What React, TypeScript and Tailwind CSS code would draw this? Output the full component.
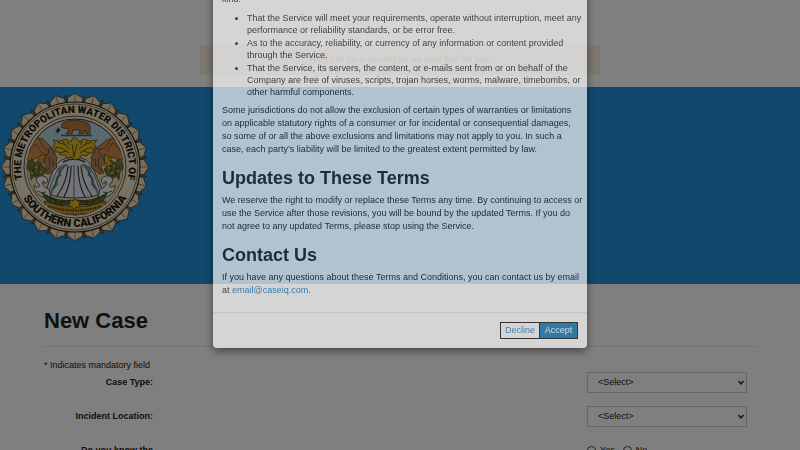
import React from "react";

const lobes = Array.from({ length: 24 }, (_, i) => i * 15);

function Seal() {
  return (
    <svg viewBox="0 0 150 150" className="block size-[150px]" role="img" aria-label="The Metropolitan Water District of Southern California">
      <defs>
        <path id="seal-top" d="M 26.1 97.8 A 54 54 0 1 1 123.9 97.8" />
        <path id="seal-bottom" d="M 15.4 87 A 61 61 0 0 0 134.6 87" />
        <clipPath id="seal-scene">
          <circle cx="75" cy="75" r="48" />
        </clipPath>
      </defs>
      {lobes.map((a) => (
        <g key={a} transform={`rotate(${a} 75 75)`} stroke="#3a2a18" strokeWidth="0.7">
          <path d="M84 14 L86 3.500 L81 8 Z" fill="#b9813c" transform="rotate(-1 75 75)" />
          <path d="M67.500 14 L67.500 6 Q71 4 75 1 Q79 4 82.500 6 L82.500 14 Z" fill="#efdfb8" />
          <path d="M75 2 V12" fill="none" strokeWidth="0.5" />
        </g>
      ))}
      <circle cx="75" cy="75" r="65" fill="#efdfb8" stroke="#33261a" strokeWidth="1.200" />
      <circle cx="75" cy="75" r="63" fill="#efe4c6" stroke="#33261a" strokeWidth="0.6" />
      <circle cx="75" cy="75" r="51" fill="#efe4c6" stroke="#33261a" strokeWidth="0.800" />
      <circle cx="75" cy="75" r="48" fill="#b5d3dc" stroke="#33261a" strokeWidth="1" />
      <g clipPath="url(#seal-scene)">
        <path d="M22 62 H128 V130 H22 Z" fill="#e9d7a8" />
        <path d="M22 64 L33 49 L38 46 L43 47 L54 58 L54 64 L42 64 L24 71 Z" fill="#c98a4b" stroke="#5b3818" strokeWidth="0.7" />
        <path d="M128 64 L117 49 L112 46 L107 48 L95 57 L95 64 L106 64 L126 69 Z" fill="#c98a4b" stroke="#5b3818" strokeWidth="0.7" />
        <path d="M28 60 L36 52 L43 62 M39 47 L44 56 L50 60 M122 61 L113 50 L107 60 M111 47 L105 56 L98 58" fill="none" stroke="#6b431e" strokeWidth="0.7" />
        {/* dam face and spillway */}
        <path d="M45 102 L53 78 Q59 65 74 65 Q89 65 94 78 L104 102 Q75 110 45 102 Z" fill="#e9e8ee" stroke="#333" strokeWidth="0.800" />
        <path d="M63 70 Q74 64 85 70" fill="none" stroke="#444" strokeWidth="1.500" />
        <g fill="none" stroke="#2d3c42" strokeWidth="1.200" strokeLinecap="round">
          <path d="M71 74 Q71 92 64 105" />
          <path d="M74 73 V106" strokeWidth="0.700" />
          <path d="M78 74 Q78 92 85 105" />
          <path d="M68 74 Q67 90 57 104" />
          <path d="M81 74 Q82 90 92 104" />
          <path d="M66 73 Q57 76 60 83 Q55 86 57 92 Q52 96 51 102" stroke="#6f9b9b" strokeWidth="2.500" />
          <path d="M83 73 Q92 76 89 83 Q94 86 92 92 Q97 96 98 102" stroke="#6f9b9b" strokeWidth="2.500" />
          <path d="M64 75 Q58 82 54 96 M85 75 Q91 82 95 96" strokeWidth="0.900" />
          <path d="M60 74 Q55 80 50 96 M89 74 Q94 80 99 96" strokeWidth="0.700" />
        </g>
        {/* groves on both banks */}
        <g fill="#6b7a3e" stroke="#26331b" strokeWidth="0.6">
          <path d="M28 70 L32 67 L35 71 L39 68 L42 73 L46 76 L43 83 L38 87 L34 84 L31 88 L30 80 L27 77 Z" />
          <path d="M122 70 L118 67 L115 71 L111 68 L108 74 L104 77 L107 83 L112 87 L116 84 L119 88 L120 80 L123 77 Z" />
          <path d="M105 62 L109 64 L110 69 L113 72 L109 75 L104 71 Z M40 64 L45 62 L46 69 L42 72 L38 69 Z" fill="#d8a828" />
        </g>
        <path d="M30 74 L36 84 M34 72 L33 84 M40 72 L38 84 M120 74 L114 84 M116 72 L117 84 M110 72 L112 84" stroke="#26331b" strokeWidth="0.7" />
        <g fill="#e1a829" stroke="#6d4c12" strokeWidth="0.4">
          {[[38, 66], [42, 68], [36, 75], [32, 81], [41, 80], [110, 67], [114, 74], [112, 81], [118, 79], [106, 73], [109, 76]].map(([x, y]) => (
            <circle key={`${x}-${y}`} cx={x} cy={y} r="1.600" />
          ))}
        </g>
        {/* waves */}
        <g fill="#eef3f3" stroke="#333" strokeWidth="0.800">
          <path d="M51 106 C42 107 33 101 34 93 C37 97 41 95 39 92 C35 89 36 85 40 84 C46 83 50 88 46 91 C44 92 43 91 44 89 C40 91 44 96 49 97 Z" />
          <path d="M98 106 C107 107 116 101 115 93 C112 97 108 95 110 92 C114 89 113 85 109 84 C103 83 99 88 103 91 C105 92 106 91 105 89 C109 91 105 96 100 97 Z" />
          <path d="M37 99 Q42 102 46 100 M112 99 Q107 102 103 100" fill="none" />
        </g>
        {/* eagle */}
        <path d="M75 68 L71 65 L67 66 L65 63 L60 63 L59 60 L55 60 L56 56 L53 54 L55 51 L53 48 L60 49 L66 47 L71 50 L72 47 L75 45 L78 48 L79 50 L84 47 L90 49 L97 48 L94 52 L96 55 L93 57 L93 61 L89 61 L87 64 L82 63 L80 66 Z" fill="#e3bd24" stroke="#5b480c" strokeWidth="0.800" />
        <path d="M57 50 Q64 51 70 57 M56 55 Q63 55 69 61 M60 61 L66 59 M92 50 Q85 51 79 57 M93 55 Q87 55 80 61 M89 61 L84 59 M63 49 L65 53 M67 49 L69 53 M87 49 L85 53 M82 49 L80 53 M72 52 L74 65 L77 52" fill="none" stroke="#5b480c" strokeWidth="0.900" />
        {/* seated figures */}
        <g fill="#b78559" stroke="#4c2d18" strokeWidth="0.7">
          <path d="M49 60 a2.500 2.500 0 1 1 4 0 L57 65 L56 72 L57 75 L53 79 L49 82 L45 81 L47 75 L44 71 L45 65 Z" />
          <path d="M99 60 a2.500 2.500 0 1 0 -4 0 L91 65 L92 72 L91 75 L96 79 L99 82 L104 81 L101 75 L105 71 L103 65 Z" />
          <path d="M49 65 L50 74 L47 80 M53 67 L53 75 M99 65 L98 74 L102 80 M95 67 L96 75" fill="none" />
        </g>
        {/* bear */}
        <path d="M61 35 L63 31 L66 30 L69 28 L73 29 L78 28 L84 30 Q89 30 90 35 L90 42 H86 L85 38 L83 42 H79 L80 38 L73 38 L72 42 H66 L69 37 L63 36 Z" fill="#b97a3e" stroke="#4c2d14" strokeWidth="0.700" />
        <path d="M61 43.500 H92" stroke="#80502a" strokeWidth="1.500" />
        <path d="M58 35 L59 37 L61 38 L59 39 L58 42 L57 40 L55 39 L57 38 Z" fill="#33261a" />
        {/* banner and laurel */}
        <path d="M44 109 Q75 121 106 109 L103 118 Q75 127 47 118 Z" fill="#c9992a" stroke="#4b370f" strokeWidth="0.800" />
        <path d="M48 114 Q75 123 102 114" fill="none" stroke="#4b370f" strokeWidth="2" strokeDasharray="1.500 1" />
        <path d="M42 101 Q58 111 75 108 Q92 111 107 101 L103 109 Q90 115 75 112 Q60 115 47 109 Z" fill="#66733f" stroke="#252f18" strokeWidth="0.800" />
        <path d="M45 103 L58 110 L71 110 M104 103 L92 110 L79 110 M50 105 L50 109 M55 107 L56 111 M61 109 L62 113 M99 105 L99 109 M94 107 L93 111 M88 109 L87 113" fill="none" stroke="#252f18" strokeWidth="0.700" />
        <path d="M75 107 L77 109 L80 109 L79 112 L80 115 L76 115 L74 117 L72 115 L69 114 L70 111 L70 108 L73 109 Z" fill="#e3bd24" stroke="#5b480c" strokeWidth="0.700" />
      </g>
      <g fill="#1c1510" textAnchor="middle" className="font-[Roboto,sans-serif] font-black">
        <text className="text-[10px]">
          <textPath href="#seal-top" startOffset="50%">THE METROPOLITAN WATER DISTRICT OF</textPath>
        </text>
        <text className="text-[11px]">
          <textPath href="#seal-bottom" startOffset="50%">SOUTHERN CALIFORNIA</textPath>
        </text>
      </g>
    </svg>
  );
}

function SelectRow({ id, label }: { id: string; label: string }) {
  return (
    <div className="flex h-[34px] items-start justify-between pr-[9px]">
      <label htmlFor={id} className="w-[109px] pt-1 text-right font-bold">
        {label}
      </label>
      <div className="relative">
        <select id={id} className="h-[21px] w-40 appearance-none border border-[#ccc] bg-white pl-[10px] text-[9px]">
          <option>&lt;Select&gt;</option>
        </select>
        <svg viewBox="0 0 8 6" className="pointer-events-none absolute top-2 right-[2px] h-[6px] w-2" aria-hidden="true">
          <path d="M1.500 1 L4 4 L6.500 1" fill="none" stroke="#222" strokeWidth="1.300" />
        </svg>
      </div>
    </div>
  );
}

function TermsDialog() {
  return (
    <div className="fixed inset-0 flex items-end justify-center overflow-hidden pb-[102px]">
      <section
        role="dialog"
        aria-modal="true"
        aria-label="Terms and Conditions"
        className="w-[374px] shrink-0 rounded-[4px] bg-white text-[#222] opacity-[0.67] shadow-[0_3px_9px_rgba(0,0,0,0.7)]"
      >
        <div className="px-[9px] pb-[15px] leading-[13px] whitespace-nowrap">
          <p>kind.</p>
          <ul className="mt-[6px] flex list-disc flex-col gap-px pl-[25px] leading-[12px]">
            <li>
              That the Service will meet your requirements, operate without interruption, meet any
              <br />
              performance or reliability standards, or be error free.
            </li>
            <li>
              As to the accuracy, reliability, or currency of any information or content provided
              <br />
              through the Service.
            </li>
            <li>
              That the Service, its servers, the content, or e-mails sent from or on behalf of the
              <br />
              Company are free of viruses, scripts, trojan horses, worms, malware, timebombs, or
              <br />
              other harmful components.
            </li>
          </ul>
          <p className="mt-[6px]">
            Some jurisdictions do not allow the exclusion of certain types of warranties or limitations
            <br />
            on applicable statutory rights of a consumer or for incidental or consequential damages,
            <br />
            so some of or all the above exclusions and limitations may not apply to you. In such a
            <br />
            case, each party’s liability will be limited to the greatest extent permitted by law.
          </p>
          <h2 className="mt-3 text-[18px] leading-5 font-bold">Updates to These Terms</h2>
          <p className="mt-[6px]">
            We reserve the right to modify or replace these Terms any time. By continuing to access or
            <br />
            use the Service after those revisions, you will be bound by the updated Terms. If you do
            <br />
            not agree to any updated Terms, please stop using the Service.
          </p>
          <h2 className="mt-3 text-[18px] leading-5 font-bold">Contact Us</h2>
          <p className="mt-[6px]">
            If you have any questions about these Terms and Conditions, you can contact us by email
            <br />
            at{" "}
            <a href="mailto:email@caseiq.com" className="text-[#0f7ac4]">
              email@caseiq.com
            </a>
            .
          </p>
        </div>
        <footer className="flex justify-end border-t border-[#e5e5e5] px-[9px] py-[9px]">
          <button type="button" className="h-[17px] w-10 border border-[#111] bg-white text-[#1b7fc4]">
            Decline
          </button>
          <button type="button" className="-ml-px h-[17px] w-[39px] border border-[#111] bg-[#0d78b8] text-white">
            Accept
          </button>
        </footer>
      </section>
    </div>
  );
}

export default function App() {
  return (
    <div className="h-screen overflow-hidden bg-white font-['Liberation_Sans',Arial,sans-serif] text-[9px] text-[#222]">
      <div className="flex h-[87px] items-center justify-center pt-8">
        <p className="h-[30px] w-1/2 bg-[#f7eee0] text-center leading-[28px] text-[#a89c86]">
          We'll just be a second as we load that for you.
        </p>
      </div>
      <header className="h-[197px] bg-[#2092da] pt-[5px]">
        <Seal />
      </header>
      <main className="px-11 pt-[22px]">
        <h1 className="border-b border-[#e5e5e5] pb-[10px] text-[22px] leading-[30px] font-bold">New Case</h1>
        <p className="mt-3 leading-[13px]">* Indicates mandatory field</p>
        <form className="leading-[13px]">
          <SelectRow id="case-type" label="Case Type:" />
          <SelectRow id="incident-location" label="Incident Location:" />
          <fieldset className="flex justify-between">
            <legend className="float-left w-[109px] pt-1 text-right font-bold">Do you know the</legend>
            <div className="flex w-[169px] items-center gap-2 pt-1">
              {["Yes", "No"].map((answer) => (
                <label key={answer} className="flex items-center gap-1">
                  <input type="radio" name="known" className="size-[9px] appearance-none rounded-full border border-[#444]" />
                  {answer}
                </label>
              ))}
            </div>
          </fieldset>
        </form>
      </main>
      <div className="fixed inset-0 bg-black/50" />
      <TermsDialog />
    </div>
  );
}
